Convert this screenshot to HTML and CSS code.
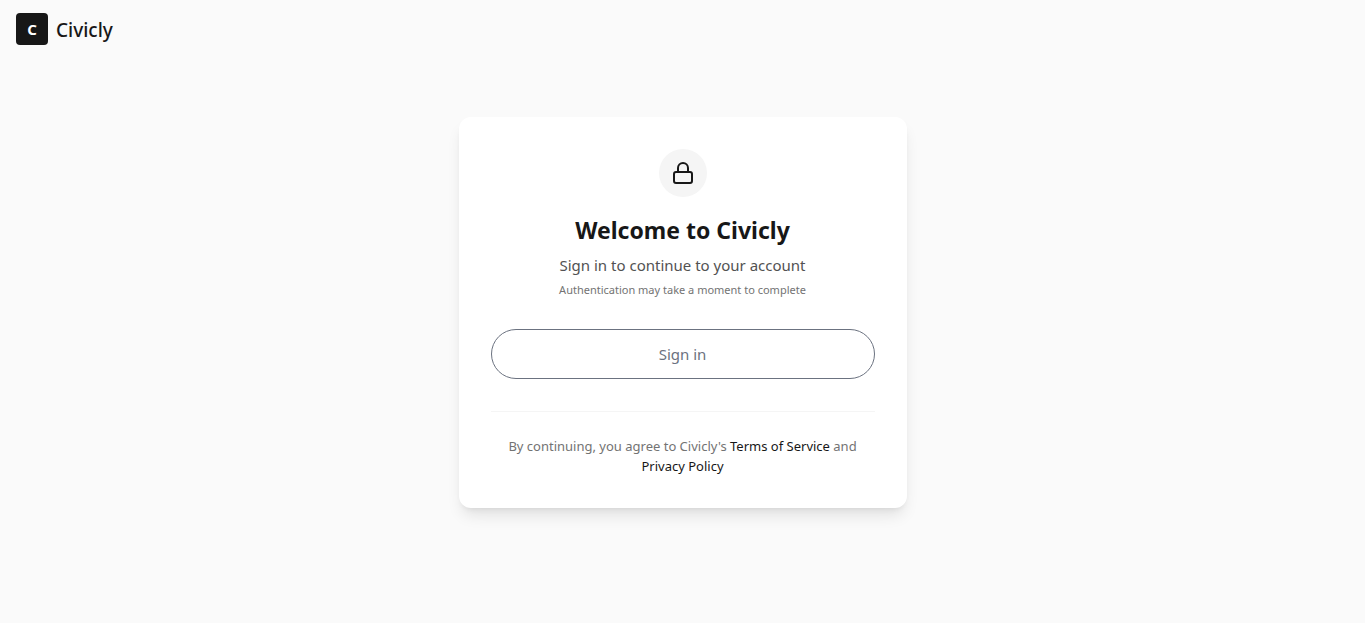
FILE: index.html
```
<!DOCTYPE html>
<html lang="en">
<head>
<meta charset="utf-8">
<meta name="viewport" content="width=device-width, initial-scale=1">
<title>Civicly – Sign in</title>
<link rel="stylesheet" href="styles.css">
</head>
<body>
<header class="header">
  <span class="logo" aria-hidden="true">C</span>
  <span class="brand">Civicly</span>
</header>
<main class="main">
  <section class="card">
    <div class="badge">
      <svg width="24" height="24" viewBox="0 0 24 24" fill="none" stroke="currentColor" stroke-width="2" stroke-linecap="round" stroke-linejoin="round" aria-hidden="true"><rect x="3" y="11" width="18" height="11" rx="2"/><path d="M7 11V7a5 5 0 0 1 10 0v4"/></svg>
    </div>
    <h1 class="title">Welcome to Civicly</h1>
    <p class="subtitle">Sign in to continue to your account</p>
    <p class="note">Authentication may take a moment to complete</p>
    <button class="signin" type="button">Sign in</button>
    <p class="legal">By continuing, you agree to Civicly's <a href="#terms">Terms of Service</a> and <a href="#privacy">Privacy Policy</a></p>
  </section>
</main>
</body>
</html>
```
FILE: styles.css
```
* {
  box-sizing: border-box;
}

body {
  margin: 0;
  min-height: 100vh;
  display: flex;
  flex-direction: column;
  background: #fafafa;
  color: #171717;
  font-family: "Segoe UI", "Noto Sans", "Open Sans", sans-serif;
}

.header {
  display: flex;
  align-items: center;
  gap: 8px;
  padding: 13px 16px;
}

.logo {
  display: flex;
  align-items: center;
  justify-content: center;
  width: 32px;
  height: 32px;
  border-radius: 4px;
  background: #171717;
  color: #fff;
  font-size: 15px;
  font-weight: 700;
}

.brand {
  font-size: 19px;
  line-height: 28px;
  font-weight: 500;
  padding-top: 2px;
}

.main {
  flex: 1;
  display: flex;
  align-items: center;
  justify-content: center;
  padding: 0 16px 56px;
}

.card {
  width: 100%;
  max-width: 448px;
  padding: 32px;
  border-radius: 12px;
  background: #fff;
  text-align: center;
  box-shadow: 0 10px 15px -3px rgba(0, 0, 0, 0.1), 0 4px 6px -4px rgba(0, 0, 0, 0.1);
}

.badge {
  display: flex;
  align-items: center;
  justify-content: center;
  width: 48px;
  height: 48px;
  margin: 0 auto 16px;
  border-radius: 50%;
  background: #f5f5f5;
}

.title {
  margin: 0 0 6px;
  font-size: 23px;
  line-height: 34px;
  font-weight: 700;
}

.subtitle {
  margin: 0 0 4px;
  font-size: 15px;
  line-height: 24px;
  color: #525252;
}

.note {
  margin: 0 0 30px;
  font-size: 11px;
  line-height: 18px;
  color: #737373;
}

.signin {
  display: block;
  width: 100%;
  height: 50px;
  margin: 0 0 32px;
  border: 1px solid #6b7280;
  border-radius: 25px;
  background: #fff;
  color: #6b7280;
  font: inherit;
  font-size: 15px;
  line-height: 24px;
}

.legal {
  margin: 0;
  padding-top: 24px;
  border-top: 1px solid #f5f5f5;
  font-size: 13px;
  line-height: 20px;
  color: #737373;
}

.legal a {
  color: #171717;
  text-decoration: none;
}
```
